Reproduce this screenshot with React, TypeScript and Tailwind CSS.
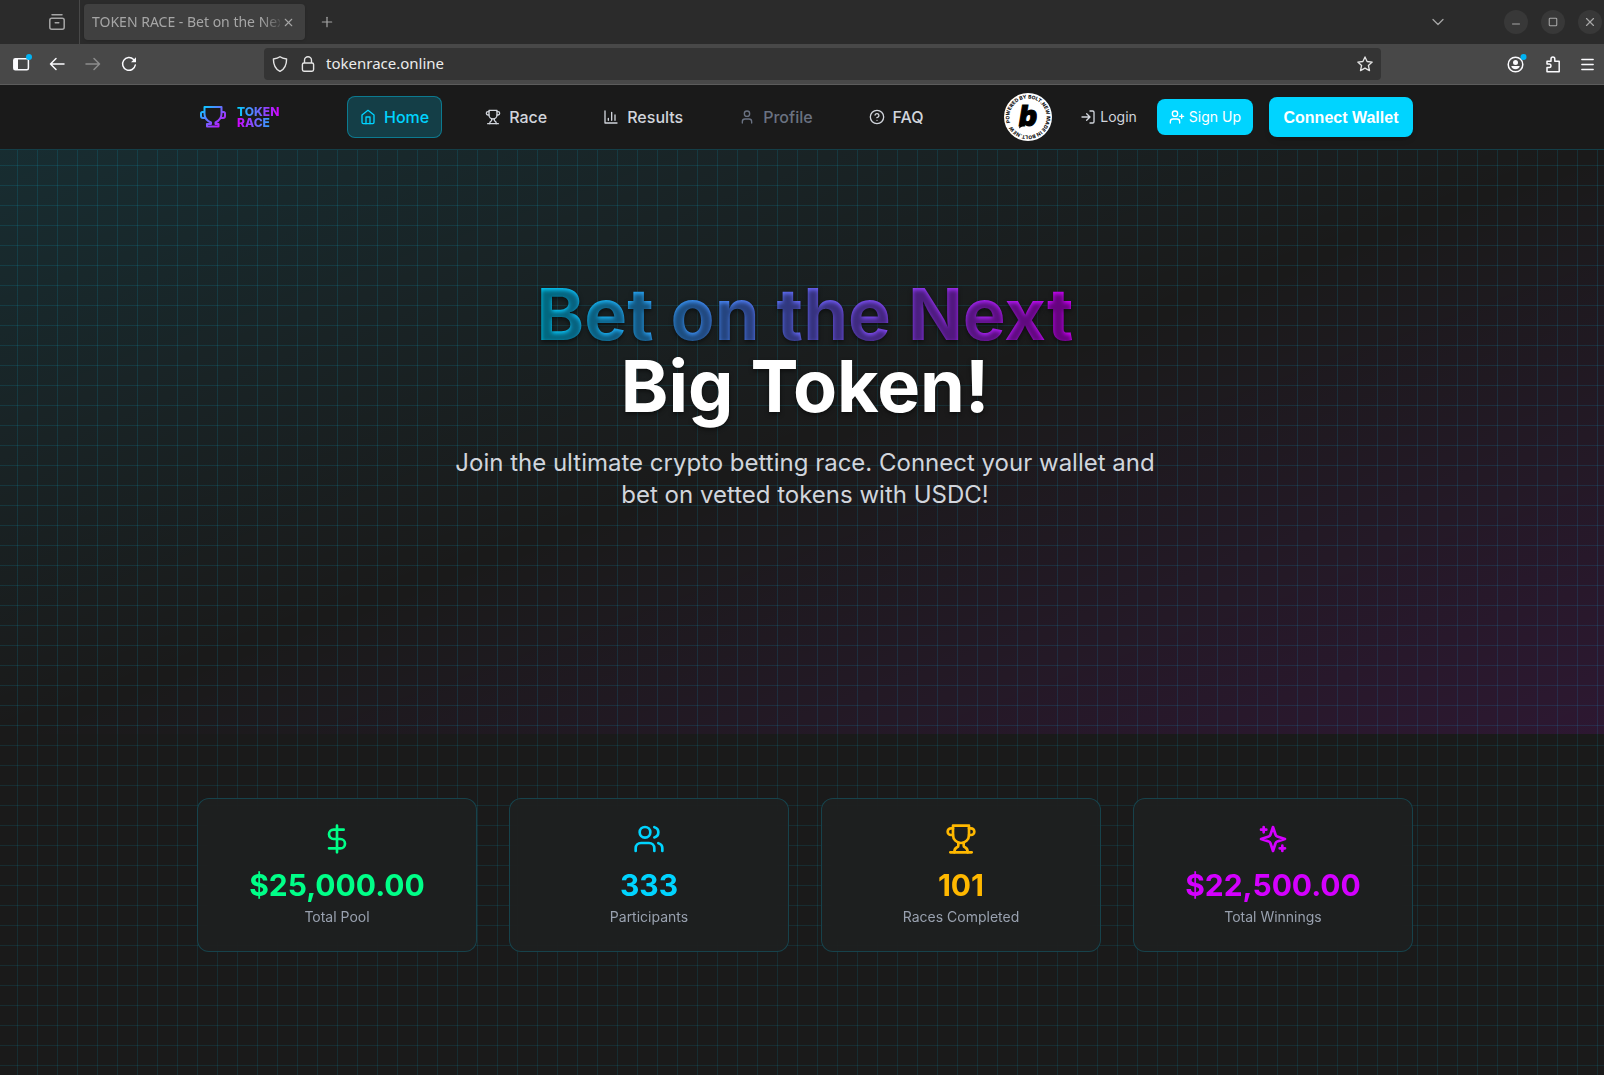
import type { ReactNode } from 'react'
import { ChevronDown, Menu, Minus, Plus, Square, X } from 'lucide-react'

const STROKE = {
  fill: 'none',
  stroke: 'currentColor',
  strokeWidth: 2,
  strokeLinecap: 'round',
  strokeLinejoin: 'round',
} as const

function Icon({ className = 'size-4', children }: { className?: string; children: ReactNode }) {
  return (
    <svg viewBox="0 0 24 24" className={className} aria-hidden="true" {...STROKE}>
      {children}
    </svg>
  )
}

/* Icon shapes */
const home = (
  <>
    <path d="m3 9 9-7 9 7v11a2 2 0 0 1-2 2H5a2 2 0 0 1-2-2z" />
    <path d="M9 22V12h6v10" />
  </>
)
const trophy = (
  <>
    <path d="M6 9H4.5a2.5 2.5 0 0 1 0-5H6" />
    <path d="M18 9h1.5a2.5 2.5 0 0 0 0-5H18" />
    <path d="M4 22h16" />
    <path d="M10 14.66V17c0 .55-.47.98-.97 1.21C7.85 18.75 7 20.24 7 22" />
    <path d="M14 14.66V17c0 .55.47.98.97 1.21C16.15 18.75 17 20.24 17 22" />
    <path d="M18 2H6v7a6 6 0 0 0 12 0V2Z" />
  </>
)
const chart = <path d="M3 3v18h18M18 17V9M13 17V5M8 17v-3" />
const user = (
  <>
    <path d="M19 21v-2a4 4 0 0 0-4-4H9a4 4 0 0 0-4 4v2" />
    <circle cx="12" cy="7" r="4" />
  </>
)
const help = (
  <>
    <circle cx="12" cy="12" r="10" />
    <path d="M9.09 9a3 3 0 0 1 5.83 1c0 2-3 3-3 3M12 17h.01" />
  </>
)
const login = <path d="M15 3h4a2 2 0 0 1 2 2v14a2 2 0 0 1-2 2h-4M10 17l5-5-5-5M15 12H3" />
const userPlus = (
  <>
    <path d="M16 21v-2a4 4 0 0 0-4-4H6a4 4 0 0 0-4 4v2M19 8v6M22 11h-6" />
    <circle cx="9" cy="7" r="4" />
  </>
)
const dollar = <path d="M12 2v20M17 5H9.5a3.5 3.5 0 0 0 0 7h5a3.5 3.5 0 0 1 0 7H6" />
const users = (
  <>
    <path d="M16 21v-2a4 4 0 0 0-4-4H6a4 4 0 0 0-4 4v2M22 21v-2a4 4 0 0 0-3-3.87M16 3.13a4 4 0 0 1 0 7.75" />
    <circle cx="9" cy="7" r="4" />
  </>
)
const sparkles = (
  <>
    <path d="m12 3-1.912 5.813a2 2 0 0 1-1.275 1.275L3 12l5.813 1.912a2 2 0 0 1 1.275 1.275L12 21l1.912-5.813a2 2 0 0 1 1.275-1.275L21 12l-5.813-1.912a2 2 0 0 1-1.275-1.275L12 3Z" />
    <path d="M5 3v4M19 17v4M3 5h4M17 19h4" />
  </>
)

const NAV = [
  { label: 'Home', icon: home, style: 'border-[#00d4ff]/40 bg-[#00d4ff]/20 text-[#00d4ff]' },
  { label: 'Race', icon: trophy, style: 'border-transparent text-gray-300' },
  { label: 'Results', icon: chart, style: 'border-transparent text-gray-300' },
  { label: 'Profile', icon: user, style: 'border-transparent text-gray-500' },
  { label: 'FAQ', icon: help, style: 'border-transparent text-gray-300' },
]

const STATS = [
  { value: '$25,000.00', label: 'Total Pool', icon: dollar, color: 'text-[#00ff88]' },
  { value: '333', label: 'Participants', icon: users, color: 'text-[#00d4ff]' },
  { value: '101', label: 'Races Completed', icon: trophy, color: 'text-[#ffb800]' },
  { value: '$22,500.00', label: 'Total Winnings', icon: sparkles, color: 'text-[#d400ff]' },
]

function TabBar() {
  return (
    <div className="flex h-11 items-center bg-[#2b2b2b] text-[#a6a6a6]">
      <div className="flex h-full w-20 items-center justify-end border-r border-[#484848] pr-[13px]">
        <button aria-label="Firefox View">
          <svg viewBox="0 0 18 18" className="size-[18px]" fill="none" stroke="currentColor" strokeWidth="1.5" strokeLinecap="round">
            <rect x="1.8" y="5.2" width="14.4" height="11" rx="2" />
            <path d="M4 1.8h10M7.2 9.8h3.6" />
          </svg>
        </button>
      </div>
      <div className="ml-1 flex h-9 w-[221px] items-center rounded bg-[#404040] pr-2 pl-2 shadow-sm">
        <span className="flex-1 overflow-hidden text-sm whitespace-nowrap [mask-image:linear-gradient(to_right,#000_170px,transparent_192px)]">
          TOKEN RACE - Bet on the Next Big Token
        </span>
        <button aria-label="Close tab" className="px-0.5">
          <X size={13} strokeWidth={2} />
        </button>
      </div>
      <button aria-label="New tab" className="ml-3.5">
        <Plus size={16} strokeWidth={1.8} />
      </button>
      <button aria-label="List all tabs" className="ml-auto">
        <ChevronDown size={20} strokeWidth={1.5} />
      </button>
      <div className="ml-14 flex gap-[13px] pr-0.5">
        <button aria-label="Minimize" className="flex size-6 items-center justify-center rounded-full bg-[#383838]">
          <Minus size={12} strokeWidth={2} className="mt-1" />
        </button>
        <button aria-label="Maximize" className="flex size-6 items-center justify-center rounded-full bg-[#383838]">
          <Square size={10} strokeWidth={2.6} rx={0} />
        </button>
        <button aria-label="Close" className="flex size-6 items-center justify-center rounded-full bg-[#383838]">
          <X size={14} strokeWidth={2} />
        </button>
      </div>
    </div>
  )
}

function Toolbar() {
  return (
    <div className="flex h-[41px] items-center border-b border-[#5c5c5c] bg-[#484848] pr-2 pl-3 text-[#fbfbfe]">
      <button aria-label="Sidebar">
        <svg viewBox="0 0 20 20" className="size-5" fill="none">
          <rect x="1.8" y="4.8" width="14.6" height="11" rx="1.5" stroke="currentColor" strokeWidth="1.5" />
          <path d="M2 5h4v11H2z" fill="currentColor" />
          <circle cx="17" cy="3" r="3" fill="#00b3f4" />
        </svg>
      </button>
      <button aria-label="Back" className="ml-[17px]">
        <svg viewBox="0 0 16 16" className="size-4" fill="none" stroke="currentColor" strokeWidth="1.5" strokeLinecap="round" strokeLinejoin="round">
          <path d="M15 8H1.5M7 2.5 1.5 8 7 13.5" />
        </svg>
      </button>
      <button aria-label="Forward" className="ml-5 text-[#8c8c8c]" disabled>
        <svg viewBox="0 0 16 16" className="size-4" fill="none" stroke="currentColor" strokeWidth="1.5" strokeLinecap="round" strokeLinejoin="round">
          <path d="M1 8h13.5M9 2.5 14.5 8 9 13.5" />
        </svg>
      </button>
      <button aria-label="Reload" className="ml-5">
        <svg viewBox="0 0 16 16" className="size-4" fill="none" stroke="currentColor" strokeWidth="1.5" strokeLinecap="round">
          <path d="M14.3 9A6.4 6.4 0 1 1 12.6 3.5L14 5" />
          <path d="M15 1.2v5H10z" fill="currentColor" stroke="none" />
        </svg>
      </button>
      <label className="mr-[126px] ml-[127px] flex h-8 flex-1 items-center rounded bg-[#343434] px-2">
        <svg viewBox="0 0 16 16" className="size-4 text-[#e4e4e4]" fill="none" stroke="currentColor" strokeWidth="1.4" strokeLinejoin="round">
          <path d="M8 .8c1.6 1.3 4.2 2 6.6 2.2C14.6 9 12.5 13.3 8 15.4 3.5 13.3 1.4 9 1.4 3 3.8 2.8 6.4 2.1 8 .8Z" />
        </svg>
        <svg viewBox="0 0 16 16" className="ml-3 size-4 text-[#e4e4e4]" fill="none" stroke="currentColor" strokeWidth="1.4">
          <rect x="2.4" y="7" width="11.2" height="8.2" rx="1.6" />
          <path d="M4.5 7V4.3a3.5 3.5 0 0 1 7 0V7" />
        </svg>
        <input
          aria-label="Address"
          defaultValue="tokenrace.online"
          className="ml-2.5 min-w-0 flex-1 bg-transparent pb-px text-[15px] text-[#ececec] outline-none"
        />
        <button aria-label="Bookmark this page">
          <svg viewBox="0 0 16 16" className="size-4 text-[#e4e4e4]" fill="none" stroke="currentColor" strokeWidth="1.3" strokeLinejoin="round">
            <path d="m8 .9 2.1 4.6 5.1.6-3.8 3.4 1.1 5.1L8 12.1l-4.5 2.5 1.1-5.1L.8 6.1l5.1-.6Z" />
          </svg>
        </button>
      </label>
      <div className="flex items-center gap-[18px]">
        <button aria-label="Account">
          <svg viewBox="0 0 20 20" className="size-5" fill="none">
            <circle cx="8.5" cy="10.5" r="7.3" stroke="currentColor" strokeWidth="1.5" />
            <circle cx="8.5" cy="8.5" r="2.5" fill="currentColor" />
            <path d="M4.3 12h8.4c0 2-2 3.2-4.2 3.2S4.3 14 4.3 12Z" fill="currentColor" />
            <circle cx="16.5" cy="3" r="3" fill="#00b3f4" />
          </svg>
        </button>
        <button aria-label="Extensions">
          <svg viewBox="0 0 16 17" className="h-[17px] w-4" fill="none" stroke="currentColor" strokeWidth="1.5" strokeLinejoin="round">
            <path d="M2 15.8v-4.3h2.2a1.7 1.7 0 0 0 0-3.5H2V5.2h4V3a1.9 1.9 0 0 1 3.8 0v2.2h4.4v10.6Z" />
          </svg>
        </button>
        <button aria-label="Menu">
          <Menu size={17} strokeWidth={2} />
        </button>
      </div>
    </div>
  )
}

function BoltBadge() {
  return (
    <a href="#bolt" aria-label="Made in Bolt" className="block size-12 shrink-0">
      <svg viewBox="0 0 48 48" className="size-12">
        <circle cx="24" cy="24" r="24" fill="#fff" />
        <path id="ring" d="M6.4 29.7A18.5 18.5 0 0 1 41.6 18.3 18.5 18.5 0 0 1 6.4 29.7" fill="none" />
        <text fontSize="5" fontWeight="800" fill="#111">
          <textPath href="#ring">POWERED BY BOLT.NEW MADE IN BOLT.NEW</textPath>
        </text>
        <text x="15" y="33" fontSize="28" fontWeight="900" fontStyle="italic" fill="#000" stroke="#000">b</text>
        <path d="M17 26 15 35.5l6-4Z" fill="#000" />
      </svg>
    </a>
  )
}

function Header() {
  return (
    <header className="border-b border-[#00d4ff]/20 bg-[#1a1a1a] pl-1.5">
      <div className="mx-auto flex h-16 max-w-7xl items-center justify-between px-8">
        <a href="#home" className="flex items-center gap-2">
          <svg viewBox="0 0 32 32" className="size-8" fill="none" stroke="url(#cup)" strokeWidth="2" strokeLinejoin="round">
            <defs>
              <linearGradient id="cup" x1="4" y1="6" x2="24" y2="28" gradientUnits="userSpaceOnUse">
                <stop stopColor="#00d4ff" />
                <stop offset="1" stopColor="#d400ff" />
              </linearGradient>
            </defs>
            <path d="M7.5 6h17v7c0 5-3 7-6 8.5V23h3v2.500H10V23h4v-1.500C10.500 20 7.500 18 7.500 13Z" />
            <path d="M7.500 11H5.500Q4 11 4 12.500V15q0 2 2 2h2M24.500 11h2q1.500 0 1.500 1.500V15q0 2-2 2h-2" />
          </svg>
          <span className="flex flex-col text-xs leading-[11px] font-extrabold">
            <span className="bg-linear-to-r/srgb from-[#00d4ff] to-[#d400ff] bg-clip-text text-transparent">TOKEN</span>
            <span className="bg-linear-to-r/srgb from-[#d400ff] to-[#00d4ff] bg-clip-text text-transparent">RACE</span>
          </span>
        </a>
        <nav className="flex gap-[30px]">
          {NAV.map(({ label, icon, style }) => (
            <a
              key={label}
              href={`#${label.toLowerCase()}`}
              className={`flex items-center gap-2 rounded-lg border px-3 py-2 font-medium ${style}`}
            >
              <Icon>{icon}</Icon>
              {label}
            </a>
          ))}
        </nav>
        <div className="flex items-center gap-4">
          <BoltBadge />
          <div className="flex items-center gap-2">
            <button className="flex items-center gap-1 px-3 py-2 text-sm text-gray-300">
              <Icon>{login}</Icon>
              Login
            </button>
            <button className="flex items-center gap-1 rounded-lg bg-[#00d4ff] px-3 py-2 text-sm text-white">
              <Icon>{userPlus}</Icon>
              Sign Up
            </button>
          </div>
          <button className="h-10 w-36 rounded-lg bg-[#00d4ff] pt-0.5 font-['Liberation_Sans',sans-serif] font-bold text-white shadow-md">
            Connect Wallet
          </button>
        </div>
      </div>
    </header>
  )
}

function Hero() {
  return (
    <section className="bg-[linear-gradient(rgba(0,212,255,0.02)_1px,transparent_1px),linear-gradient(90deg,rgba(0,212,255,0.02)_1px,transparent_1px),linear-gradient(to_bottom_right,rgba(0,212,255,0.1),transparent,rgba(212,0,255,0.1))] bg-size-[20px_20px,20px_20px,100%_100%] bg-position-[-3px_15px,-3px_15px,0px_0px] pt-32 pb-[223px] pl-1.5 text-center">
      <h1 className="mb-[25px] text-7xl leading-none font-bold text-white [text-shadow:0_2px_4px_rgba(0,0,0,0.5)]">
        <span className="bg-linear-to-r/srgb from-[#00d4ff] to-[#d400ff] bg-clip-text text-transparent">Bet on the Next</span>
        <br />
        Big Token!
      </h1>
      <p className="mx-auto max-w-[720px] text-2xl leading-8 text-gray-300">
        Join the ultimate crypto betting race. Connect your wallet and bet on vetted tokens with USDC!
      </p>
    </section>
  )
}

function Stats() {
  return (
    <section className="py-16 pl-1.5">
      <div className="mx-auto grid max-w-7xl grid-cols-4 gap-8 px-8">
        {STATS.map(({ value, label, icon, color }) => (
          <div
            key={label}
            className="flex flex-col items-center rounded-xl border border-[#00d4ff]/20 bg-[#1e2020]/80 p-6 backdrop-blur-sm"
          >
            <Icon className={`mb-3 size-8 ${color}`}>{icon}</Icon>
            <div className={`mb-1 text-3xl leading-9 font-bold ${color}`}>{value}</div>
            <div className="text-sm text-gray-400">{label}</div>
          </div>
        ))}
      </div>
    </section>
  )
}

export default function App() {
  return (
    <div className="flex min-h-screen flex-col bg-[#1a1a1a]">
      <div className="font-['Noto_Sans',sans-serif]">
        <TabBar />
        <Toolbar />
      </div>
      <div className="flex-1 bg-[linear-gradient(rgba(0,212,255,0.1)_1px,transparent_1px),linear-gradient(90deg,rgba(0,212,255,0.1)_1px,transparent_1px)] bg-size-[20px_20px] bg-position-[-3px_0px] font-['Inter',sans-serif]">
        <Header />
        <main>
          <Hero />
          <Stats />
        </main>
      </div>
    </div>
  )
}
